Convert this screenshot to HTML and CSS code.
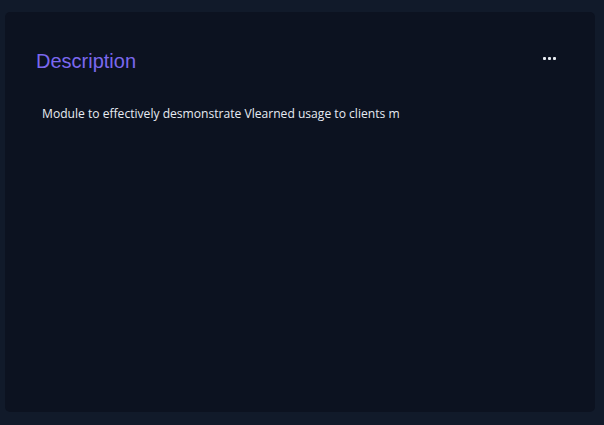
FILE: index.html
```html
<!DOCTYPE html>
<html>
<head>
<meta charset="utf-8">
<link rel="stylesheet" href="styles.css">
</head>
<body>
<div class="card">
  <div class="card-header">
    <h2 class="title">Description</h2>
    <button class="menu" aria-label="More options">
      <span class="dot"></span><span class="dot"></span><span class="dot"></span>
    </button>
  </div>
  <p class="desc">Module to effectively desmonstrate Vlearned usage to clients m</p>
</div>
</body>
</html>
```
FILE: styles.css
```css
html, body {
  margin: 0;
  padding: 0;
  background: #111a2a;
  height: 100%;
}
body {
  padding: 12px 9px 13px 5px;
  box-sizing: border-box;
}
.card {
  background: #0c1220;
  border-radius: 5px;
  height: 400px;
  box-sizing: border-box;
  padding: 37px 39px 0 31px;
}
.card-header {
  display: flex;
  justify-content: space-between;
  align-items: center;
  height: 25px;
}
.title {
  margin: 0;
  font-family: "Liberation Sans", Arial, sans-serif;
  font-weight: normal;
  font-size: 20px;
  color: #7b68ee;
  line-height: 25px;
}
.menu {
  background: none;
  border: 0;
  padding: 0;
  display: flex;
  gap: 2px;
  margin-bottom: 7px;
}
.dot {
  width: 3px;
  height: 3px;
  background: #e8ecf2;
  border-radius: 1px;
}
.desc {
  margin: 31px 0 0 6px;
  font-family: "Open Sans", sans-serif;
  font-size: 12.1px;
  color: #e6ebf2;
}
```
